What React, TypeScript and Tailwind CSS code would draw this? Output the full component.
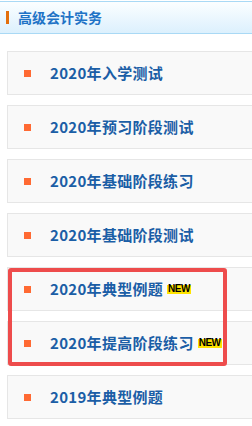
const items = [
  { title: '2020年入学测试' },
  { title: '2020年预习阶段测试' },
  { title: '2020年基础阶段练习' },
  { title: '2020年基础阶段测试' },
];

const hot = [
  { title: '2020年典型例题' },
  { title: '2020年提高阶段练习' },
];

function NewBadge() {
  return (
    <span className="ml-[4px] inline-flex h-[9px] items-center bg-[#ffe400] px-[1px] text-[10px] font-bold leading-none tracking-[-0.5px] text-black [font-family:'Liberation_Sans',sans-serif]">
      NEW
    </span>
  );
}

function Item({ title, isNew }: { title: string; isNew?: boolean }) {
  return (
    <div className="flex h-[44px] items-center border border-[#e6e6e6] bg-[#f9f9f9]">
      <span className="ml-[16px] size-[7px] bg-[#ff6a33]" />
      <span className="ml-[19px] text-[15px] font-bold tracking-[0.3px] text-[#1b5ea6]">{title}</span>
      {isNew ? <NewBadge /> : null}
    </div>
  );
}

export default function App() {
  return (
    <div className="h-[426px] w-[252px] overflow-hidden bg-white [font-family:'Noto_Sans_CJK_SC','Noto_Sans',sans-serif]">
      <div className="mt-[1px] flex h-[33px] items-center border-y border-[#a9d9f5] bg-gradient-to-b from-[#fbfeff] to-[#dcf0fd]">
        <span className="ml-[6px] h-[13px] w-[3px] bg-[#e36f0c]" />
        <span className="ml-[9px] text-[14px] font-bold text-[#1f73c6]">高级会计实务</span>
      </div>
      <div className="ml-[7px] mt-[17px] flex w-[270px] flex-col gap-[10px]">
        {items.map((item) => (
          <Item key={item.title} title={item.title} />
        ))}
        <div className="relative flex flex-col gap-[10px]">
          {hot.map((item) => (
            <Item key={item.title} title={item.title} isNew />
          ))}
          <div className="pointer-events-none absolute left-[1px] top-[1px] h-[98px] w-[219px] rounded-[3px] border-[4px] border-[#ee4c4c]" />
        </div>
        <Item title="2019年典型例题" />
      </div>
    </div>
  );
}
